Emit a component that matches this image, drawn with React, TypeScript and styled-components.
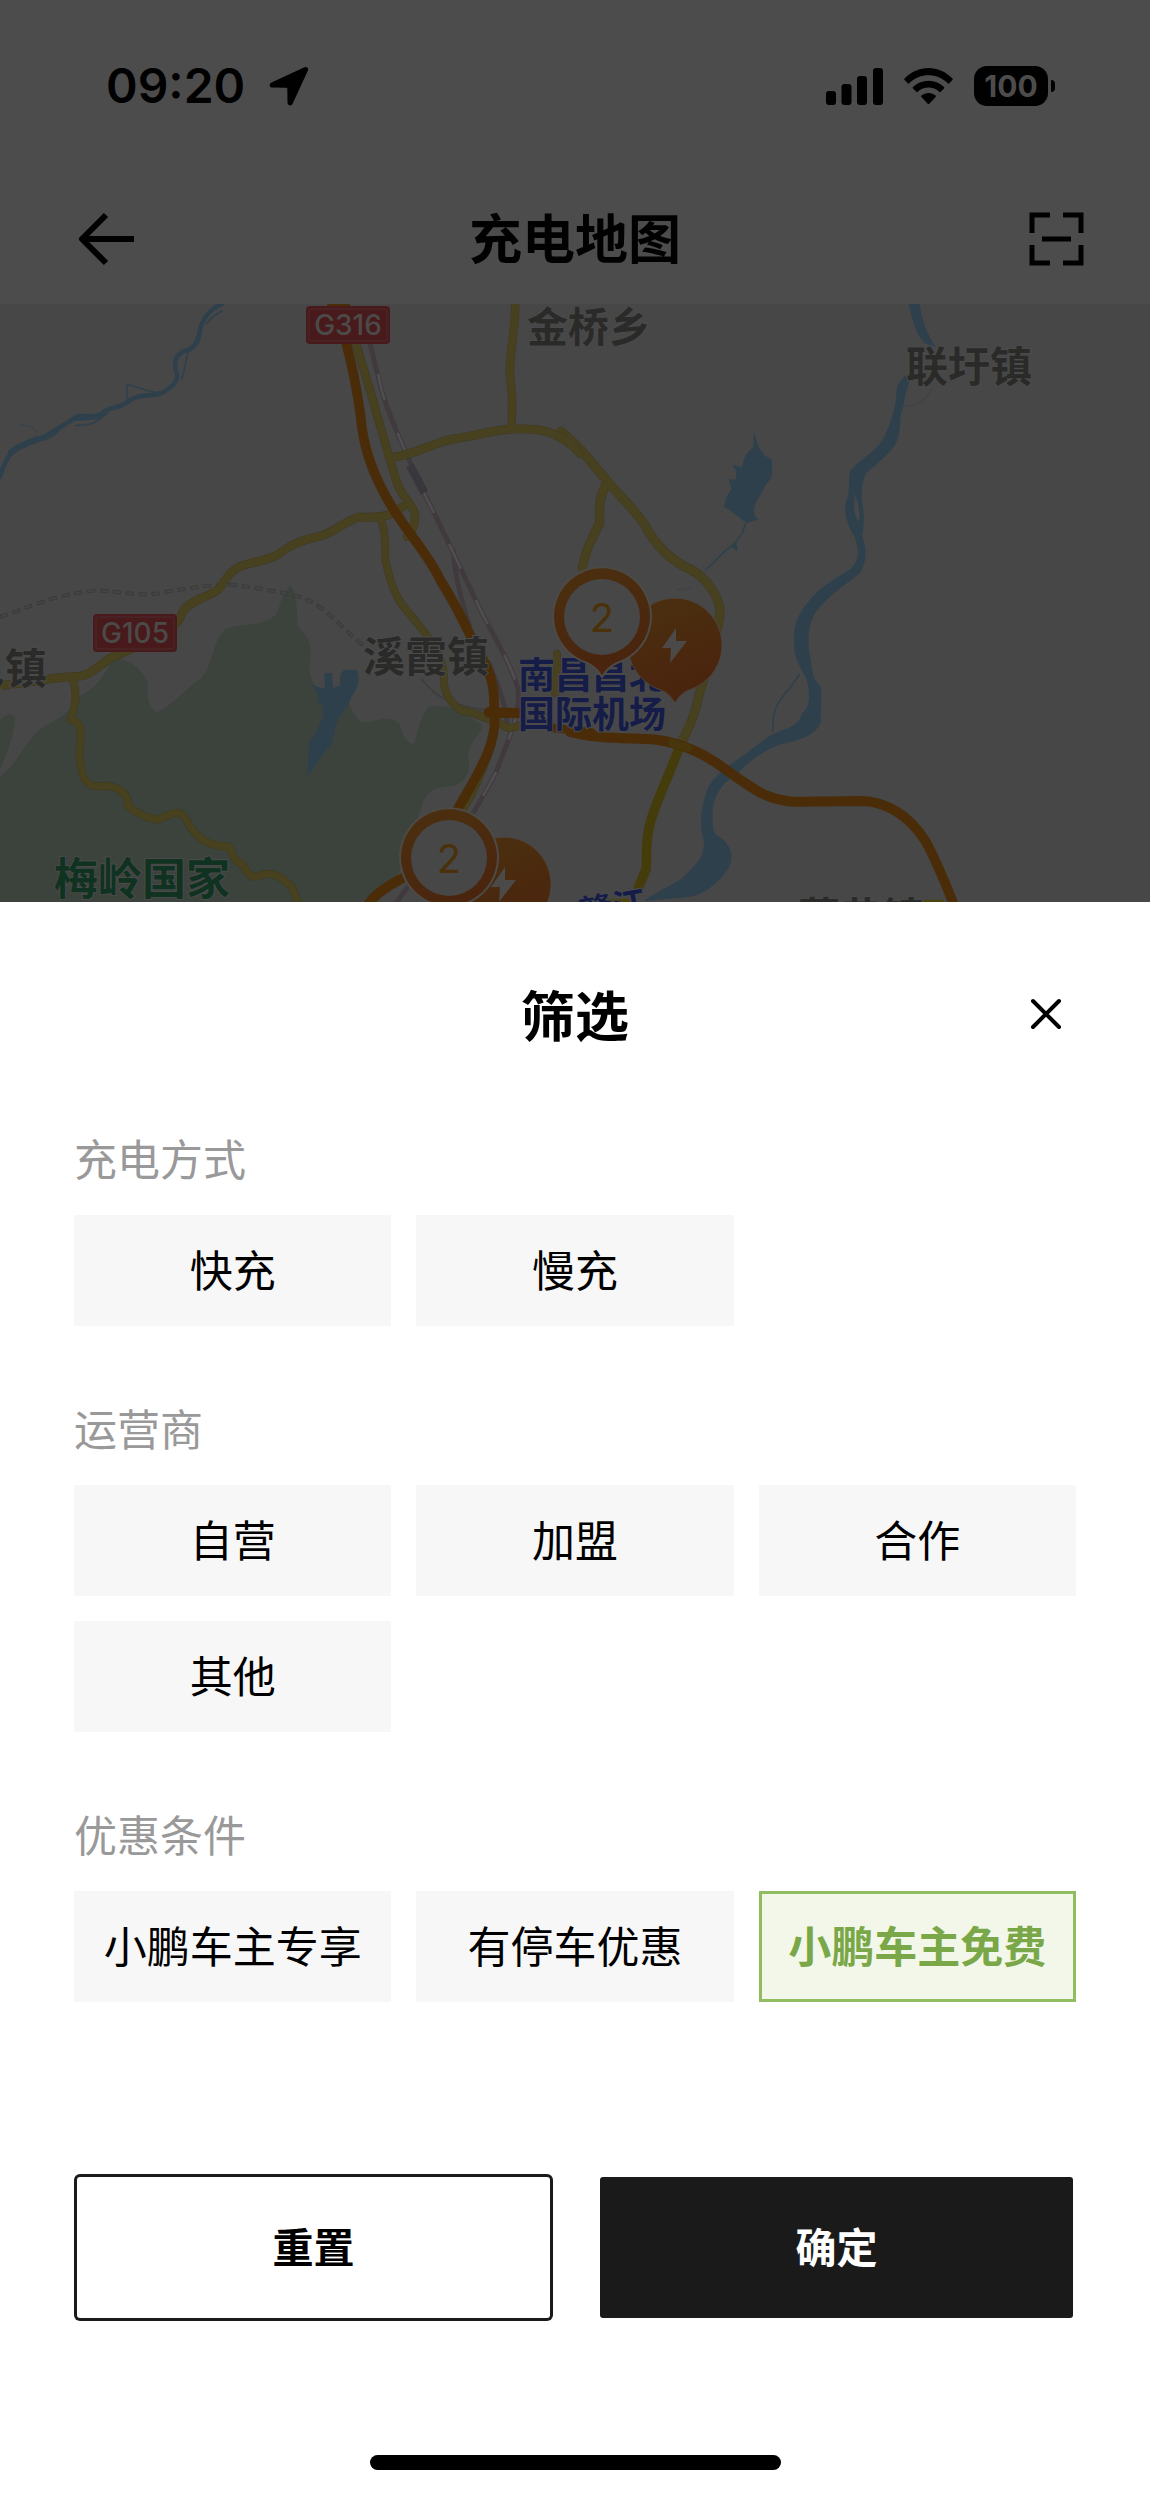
import React, { useState } from "react";
import styled, { createGlobalStyle, css } from "styled-components";

const sans = `Inter, "Noto Sans CJK SC", sans-serif`;
const cjk = `"Noto Sans CJK SC", "Noto Sans", sans-serif`;

const dim = {
  ink: "#010101",
  surface: "#4c4c4c",
  land: "#474748",
  forest: "#3b433c",
  water: "#2d404c",
  yellow: "#484120",
  yellowEdge: "#3f3b20",
  orange: "#4a2d08",
  rail: "#403a3e",
  red: "#481a1b",
  place: "#2a2a29",
  airport: "#151c48",
  park: "#103221",
  white: "#4b4a49",
};

const GlobalStyle = createGlobalStyle`
  * { box-sizing: border-box; }
  html, body { margin: 0; background: #ffffff; }
  button { font: inherit; color: inherit; border: 0; padding: 0; background: none; cursor: pointer; }
`;

const Screen = styled.div`
  display: flex;
  flex-direction: column;
  min-height: 100vh;
  background: ${dim.surface};
  font-family: ${cjk};
  color: ${dim.ink};
`;

const StatusBar = styled.div`
  display: flex;
  align-items: center;
  justify-content: space-between;
  height: 172px;
  padding: 0 95px 0 106px;
  font-family: ${sans};
`;

const StatusGroup = styled.div<{ $gap: number }>`
  display: flex;
  align-items: center;
  gap: ${(p) => p.$gap}px;
`;

const Clock = styled.span`
  font-size: 48px;
  font-weight: 600;
  line-height: 60px;
`;

const Battery = styled.div`
  display: flex;
  align-items: center;
  gap: 3px;
`;

const BatteryBody = styled.span`
  width: 74px;
  height: 40px;
  border-radius: 13px;
  background: ${dim.ink};
  color: ${dim.surface};
  font-size: 30px;
  font-weight: 700;
  line-height: 40px;
  text-align: center;
`;

const BatteryTip = styled.span`
  width: 4px;
  height: 12px;
  border-radius: 0 4px 4px 0;
  background: ${dim.ink};
`;

const NavBar = styled.header`
  display: grid;
  grid-template-columns: 84px 1fr 84px;
  align-items: center;
  height: 132px;
  padding: 2px 52px 0;
`;

const NavTitle = styled.h1`
  margin: 0;
  padding-bottom: 6px;
  font-size: 53px;
  font-weight: 700;
  line-height: 74px;
  text-align: center;
`;

const IconButton = styled.button`
  display: flex;
  align-items: center;
  justify-content: center;
  min-width: 60px;
  height: 60px;
`;

const MapFrame = styled.div`
  flex: 1 0 598px;
  display: flex;
  overflow: hidden;
  background: ${dim.land};

  svg {
    width: 100%;
    height: 598px;
  }
`;

const Sheet = styled.section`
  display: flex;
  flex-direction: column;
  padding-bottom: 23px;
  background: #ffffff;
  color: #000000;
`;

const SheetHeader = styled.div`
  display: grid;
  grid-template-columns: 60px 1fr 60px;
  align-items: center;
  padding: 74px 74px 76px;
`;

const SheetTitle = styled.h2`
  grid-column: 2;
  margin: 0;
  font-size: 54px;
  font-weight: 700;
  line-height: 75px;
  text-align: center;
`;

const Sections = styled.div`
  display: flex;
  flex-direction: column;
  gap: 71px;
  padding: 0 74px;
`;

const SectionLabel = styled.h3`
  margin: 0 0 28px;
  color: #999999;
  font-size: 43px;
  font-weight: 400;
  line-height: 60px;
`;

const OptionGrid = styled.div`
  display: grid;
  grid-template-columns: repeat(3, 1fr);
  gap: 25px;
`;

const Option = styled.button<{ $selected: boolean }>`
  height: 111px;
  padding-bottom: 6px;
  background: #f7f7f7;
  font-size: 43px;
  line-height: 60px;
  white-space: nowrap;

  ${(p) =>
    p.$selected &&
    css`
      border: 3px solid #92bc60;
      background: #f2f7ea;
      color: #7aa748;
      font-weight: 700;
    `}
`;

const Actions = styled.div`
  display: grid;
  grid-template-columns: 1fr 1fr;
  gap: 50px;
  margin: 175px 77px 137px;
`;

const Action = styled.button<{ $primary?: boolean }>`
  height: 141px;
  padding-bottom: 6px;
  border-radius: 3px;
  font-size: 41px;
  font-weight: 700;
  line-height: 60px;
  background: ${(p) => (p.$primary ? "#1a1a1a" : "#ffffff")};
  color: ${(p) => (p.$primary ? "#ffffff" : "#000000")};
  box-shadow: ${(p) => (p.$primary ? "none" : "0 0 0 3px #1a1a1a")};
`;

const HomeIndicator = styled.div`
  align-self: center;
  width: 411px;
  height: 15px;
  border-radius: 8px;
  background: #000000;
`;

function LocationArrow() {
  return (
    <svg width="40" height="40" viewBox="0 0 40 40" aria-hidden="true">
      <path
        d="M35.500 1.300 2.500 16.600c-2.800 1.400-2.200 4.900 1 5l14 .2c.5 0 .8.3.8.8l.2 13.900c.1 3.300 3.800 3.900 5.100 1.200L38.900 4.600c1-2.200-1.200-4.300-3.400-3.300z"
        fill={dim.ink}
      />
    </svg>
  );
}

function SignalIcon() {
  return (
    <svg width="57" height="37" viewBox="0 0 57 37" aria-hidden="true" fill={dim.ink}>
      <rect x="0" y="23" width="10" height="14" rx="3" />
      <rect x="15.500" y="16" width="10" height="21" rx="3" />
      <rect x="31" y="8" width="10" height="29" rx="3" />
      <rect x="47" y="0" width="10" height="37" rx="3" />
    </svg>
  );
}

function WifiIcon() {
  return (
    <svg width="49" height="37" viewBox="0 0 49 37" aria-hidden="true" fill={dim.ink}>
      <path d="M.6 10.500C14-3.500 35-3.500 48.400 10.500c.5.5.5 1 0 1.500l-3.200 3.300c-.5.5-1 .5-1.500 0-10.800-10.600-27.600-10.600-38.400 0-.5.5-1 .5-1.500 0L.6 12c-.5-.5-.5-1 0-1.500z" />
      <path d="M9 19c8.700-8.500 22.300-8.500 31 0 .5.500.5 1 0 1.500l-3.300 3.300c-.5.5-1 .5-1.500 0-6-5.600-15.400-5.600-21.400 0-.5.5-1 .5-1.500 0L9 20.500c-.5-.5-.5-1 0-1.500z" />
      <path d="M17.400 27.600c4-3.500 10.200-3.500 14.200 0 .5.500.5 1 0 1.500l-6.300 6.600c-.5.5-1.100.5-1.600 0l-6.300-6.600c-.5-.5-.5-1 0-1.500z" />
    </svg>
  );
}

function BackIcon() {
  return (
    <svg width="84" height="60" viewBox="0 0 84 60" fill="none" stroke={dim.ink} strokeWidth="6" aria-hidden="true">
      <path d="M54 6 30 30l24 24M30 30h52" strokeLinejoin="round" />
    </svg>
  );
}

function ScanIcon() {
  return (
    <svg width="60" height="60" viewBox="0 0 60 60" fill="none" stroke={dim.ink} strokeWidth="5" aria-hidden="true">
      <path d="M6 24V6h18M37 6h18v18M55 36v18H37M24 54H6V36M16 30h29" />
    </svg>
  );
}

function CloseIcon() {
  return (
    <svg width="32" height="32" viewBox="0 0 32 32" stroke="#000000" strokeWidth="4" strokeLinecap="round" aria-hidden="true">
      <path d="M3 3l26 26M29 3 3 29" />
    </svg>
  );
}

function Shield({ x, y, name }: { x: number; y: number; name: string }) {
  return (
    <g>
      <rect x={x} y={y} width="84" height="38" rx="4" fill={dim.red} />
      <rect x={x + 3} y={y + 3} width="78" height="32" rx="2" fill="none" stroke="#4a2c2e" />
      <text x={x + 42} y={y + 29} textAnchor="middle" fontFamily={sans} fontSize="28" fontWeight="500" fill={dim.white}>
        {name}
      </text>
    </g>
  );
}

function Bolt({ x, y }: { x: number; y: number }) {
  return (
    <path
      transform={`translate(${x} ${y})`}
      d="M1-17-13 3h9l-1 15 L12-4H1L1-17z"
      fill={dim.white}
    />
  );
}

function ChargerPin({ x, y }: { x: number; y: number }) {
  return (
    <g>
      <path
        transform={`translate(${x} ${y})`}
        d="M-14 45A47 47 0 1 1 14 45Q6 48 0 58-6 48-14 45z"
        fill="url(#pin)"
        stroke="#4d443c"
        strokeWidth="1"
      />
      <Bolt x={x} y={y} />
    </g>
  );
}

function CountPin({ x, y, count }: { x: number; y: number; count: number }) {
  return (
    <g>
      <path
        transform={`translate(${x} ${y})`}
        d="M-15 46A49 49 0 1 1 15 46Q6 50 0 60-6 50-15 46z"
        fill="url(#pin)"
        stroke="#4d4a46"
        strokeWidth="2"
      />
      <circle cx={x} cy={y} r="38" fill={dim.land} />
      <text x={x} y={y + 15} textAnchor="middle" fontFamily={sans} fontSize="40" fill="#4b3109">
        {count}
      </text>
    </g>
  );
}

function Place({ x, y, size, color, children }: { x: number; y: number; size: number; color: string; children: string }) {
  return (
    <text
      x={x}
      y={y}
      fontFamily={cjk}
      fontSize={size}
      fontWeight="700"
      fill={color}
      stroke="#4a4a4b"
      strokeWidth="2"
      paintOrder="stroke"
    >
      {children}
    </text>
  );
}

/* Two map tiles, each in its own grid, placed side by side. */
function WestTile() {
  return (
    <g transform="translate(0 -4) scale(.37 .389)" fill="none" strokeLinejoin="round" strokeLinecap="round">
      <path
        fill={dim.forest}
        d="M0 1225C40 1200 60 1150 100 1110C140 1080 190 1070 210 1020C260 1000 290 960 305 915C350 930 380 940 400 985C395 1020 400 1050 425 1060C470 1040 500 1000 540 975C580 940 570 880 610 845C660 830 710 840 745 810C760 790 755 760 785 735C805 760 800 790 805 840C830 860 842 880 838 930C830 960 850 1000 870 1010L920 1000C940 1010 945 1060 975 1085C1010 1090 1050 1060 1080 1090C1090 1120 1100 1145 1120 1140C1130 1110 1140 1050 1165 1045C1200 1040 1230 1050 1265 1070L1300 1090C1310 1110 1270 1130 1265 1170C1275 1210 1260 1240 1220 1250C1170 1250 1150 1270 1140 1300C1120 1360 1090 1400 1080 1470L980 1570H0Z"
      />
      <path fill={dim.forest} d="M0 1080C20 1060 45 1060 40 1085C35 1120 20 1170 0 1205Z" />

      <g stroke={dim.water}>
        <path strokeWidth="12" d="M600 10C570 20 545 50 540 80C538 105 530 120 510 128C480 135 468 150 475 180C490 210 460 225 440 238C410 250 370 240 345 262C320 280 300 275 285 285C265 310 240 295 210 300C170 320 140 345 100 360C70 370 40 380 25 400C10 420 5 440 0 455" />
        <path strokeWidth="4" d="M510 130C500 160 500 180 490 205M440 238C400 240 370 220 342 217L345 262M560 60C570 40 590 35 600 28M285 285C270 320 240 320 205 323M160 335C130 365 110 360 70 368M540 80L520 120" />
        <path strokeWidth="2" d="M100 340C90 320 70 325 55 320" />
        <path strokeWidth="16" d="M285 288C265 306 240 298 210 303M100 358C70 370 50 375 30 392" />
      </g>
      <path fill={dim.water} d="M877 960L897 958L900 1000L922 995C915 970 920 955 935 950L965 952C975 980 965 1000 950 1020C935 1060 915 1065 912 1085C900 1110 905 1130 893 1145C870 1165 855 1200 830 1222C833 1180 835 1160 835 1135C855 1120 860 1090 875 1070L872 1040L860 1035C865 1010 850 1000 843 990L878 1000Z" />
      <path fill={dim.water} d="M875 1005L925 990L955 955L940 1040L900 1075L870 1055Z" />

      <path stroke="#3b3b3a" strokeWidth="10" strokeDasharray="22 13" strokeLinecap="butt" d="M0 815C80 790 150 755 260 747C350 750 380 765 450 750C520 740 570 730 640 733C720 745 800 755 840 775C890 800 930 850 985 890" />
      <path stroke={dim.land} strokeWidth="4" strokeDasharray="16 19" strokeDashoffset="-3" strokeLinecap="butt" d="M0 815C80 790 150 755 260 747C350 750 380 765 450 750C520 740 570 730 640 733C720 745 800 755 840 775C890 800 930 850 985 890" />
      <path stroke="#3d3d3d" strokeWidth="5" strokeDasharray="14 6" d="M1140 975C1170 1010 1200 1040 1320 1055" />

      <path stroke={dim.rail} strokeWidth="13" strokeLinecap="butt" d="M1000 110C1020 190 1030 240 1060 310C1100 400 1130 470 1180 560C1210 620 1240 680 1290 780C1330 860 1380 930 1400 1000C1410 1060 1370 1140 1340 1215C1310 1270 1290 1300 1260 1350M1225 640C1230 720 1250 780 1270 840M1320 930C1350 1000 1370 1050 1370 1090M1110 1500L1070 1550" />
      <path stroke="#504e51" strokeWidth="7" strokeDasharray="70 90" strokeLinecap="butt" d="M1022 190C1032 240 1040 260 1060 310C1100 400 1130 470 1180 560C1210 620 1240 680 1290 780C1330 860 1380 930 1400 1000C1410 1060 1370 1140 1340 1215C1310 1270 1290 1300 1270 1330" />
      <path stroke="#39373b" strokeWidth="22" strokeLinecap="butt" d="M1108 425L1147 495" />

      {[dim.yellowEdge, dim.yellow].map((color, i) => (
        <g key={color} stroke={color}>
          <path strokeWidth={23 - i * 3} d="M962 110C985 190 1005 240 1020 300C1040 360 1055 420 1075 475C1090 510 1110 520 1120 545C1125 570 1118 590 1100 608M1055 405C1120 400 1160 370 1220 358C1280 352 1330 333 1382 332C1460 328 1510 335 1568 395M1392 10C1395 90 1370 150 1380 210C1388 260 1383 300 1382 332" />
          <path strokeWidth={23 - i * 3} d="M1090 530C1060 560 1010 560 970 558C930 570 890 605 860 608C800 620 780 635 750 655C700 680 660 670 625 700C600 725 600 745 570 755C540 770 500 780 490 810C480 850 370 890 300 920C260 945 240 970 200 968C140 970 80 985 10 990" />
          <path strokeWidth={21 - i * 3} d="M1030 565C1045 600 1040 640 1042 670C1060 750 1080 780 1110 810C1150 860 1190 890 1200 960C1195 1000 1210 1030 1245 1055C1280 1060 1300 1070 1330 1080C1370 1090 1360 1110 1400 1095M1330 1140C1300 1220 1280 1270 1250 1310" />
          <path strokeWidth={21 - i * 3} d="M195 970C210 1010 205 1040 190 1080C230 1080 215 1130 215 1170C220 1220 225 1250 265 1250C310 1245 350 1265 345 1300C370 1320 400 1335 430 1335C460 1320 490 1305 505 1340C530 1380 550 1400 610 1405C630 1400 620 1440 655 1450C670 1475 680 1490 700 1480C740 1465 770 1490 790 1510L805 1550M1505 910C1510 940 1500 970 1500 1010" />
        </g>
      ))}
      <path stroke={dim.orange} strokeWidth="26" d="M930 90C950 160 965 230 975 300C980 370 1000 430 1040 500C1090 590 1150 640 1190 720C1230 780 1250 820 1270 860C1300 920 1340 960 1335 1050C1350 1140 1290 1220 1230 1320C1180 1400 1110 1480 1080 1490C1040 1510 1010 1530 990 1560M1320 1060L1400 1062" />
      <path stroke={dim.orange} strokeWidth="22" d="M895 12H935M1495 1100L1600 1112" />
    </g>
  );
}

function EastTile() {
  return (
    <g transform="translate(570 -4) scale(.37 .389)" fill="none" strokeLinejoin="round" strokeLinecap="round">
      <path fill={dim.water} d="M915 10H945C950 50 965 90 990 122L960 112C935 90 925 50 915 10Z" />
      <path
        fill={dim.water}
        d="M905 195C915 200 920 212 912 225C900 260 905 270 895 290C890 320 895 340 880 370C860 400 830 420 800 445C790 470 785 490 790 520C795 550 795 580 790 605C800 640 805 665 785 700C750 730 710 750 680 785C640 820 640 880 650 920C655 950 655 975 675 990C685 1010 675 1060 678 1085C660 1125 620 1130 560 1145C510 1165 480 1190 450 1220C410 1240 385 1280 385 1320C385 1350 385 1370 400 1378C440 1400 445 1440 425 1465C400 1500 360 1530 320 1535L200 1545C250 1510 290 1500 310 1480C340 1450 370 1430 360 1380C345 1340 360 1290 370 1260C385 1225 420 1205 440 1190C480 1165 520 1130 550 1115C590 1100 620 1095 625 1065C650 1045 650 1020 640 975C620 940 605 920 606 890C600 840 620 800 645 775C670 740 720 715 760 690C785 665 780 640 770 610C750 580 740 550 745 520C760 490 750 460 757 440C780 410 830 390 850 350C870 310 880 280 883 230C885 215 895 205 905 195Z"
      />
      <path fill={dim.land} d="M770 500C782 530 785 550 780 570C770 560 765 530 770 500Z" />
      <path fill={dim.water} d="M497 340C505 355 502 370 515 385C525 405 540 405 546 412V450C540 470 525 475 518 495C510 510 500 520 497 540C500 555 500 560 512 563L480 573C460 565 445 545 417 533C420 500 430 500 437 485L428 460L447 462L450 440L438 423L465 430C470 410 475 390 495 380Z" />
      <path stroke={dim.water} strokeWidth="4" d="M475 575L465 600L450 620L435 635C410 645 400 670 370 690M620 962C600 1000 560 1020 550 1070L548 1110" />
      <path stroke="#3c4347" strokeWidth="3" d="M900 272C940 275 960 260 980 225M360 685L370 695L350 715M325 740L290 745" />
      <path fill={dim.water} d="M437 635L450 622L453 645Z" />

      {[dim.yellowEdge, dim.yellow].map((color, i) => (
        <g key={color} stroke={color}>
          <path strokeWidth={25 - i * 3} d="M-25 338C30 380 60 420 100 465C140 510 170 535 200 575C230 630 270 670 330 695C370 715 410 770 405 810C390 900 360 970 345 1030C335 1080 310 1120 300 1140M100 470C75 510 80 540 80 575C50 630 40 650 33 690" />
        </g>
      ))}
      <path stroke="#453c0c" strokeWidth="26" d="M295 1150C270 1220 240 1270 218 1340C200 1400 210 1440 205 1465L185 1510" />
      <path stroke={dim.orange} strokeWidth="26" d="M0 1110C80 1130 160 1125 230 1130C310 1140 370 1170 440 1220C500 1260 540 1290 620 1290L790 1288C860 1290 920 1330 960 1390C990 1440 1010 1490 1040 1560" />
      <path stroke="#48370c" strokeWidth="20" d="M275 1138L320 1152" />
      <path stroke="#4a430b" strokeWidth="10" d="M960 1547H1005M100 1544H170" />
    </g>
  );
}

function ChargingMap() {
  return (
    <svg viewBox="0 0 1150 598" preserveAspectRatio="xMidYMid slice" role="img" aria-label="充电地图">
      <defs>
        <linearGradient id="pin" x1="0" y1="0" x2="0.300" y2="1">
          <stop offset="0" stopColor="#4b300f" />
          <stop offset="1" stopColor="#4a240e" />
        </linearGradient>
      </defs>
      <rect width="1150" height="598" fill={dim.land} />
      <EastTile />
      <WestTile />
      <Shield x={306} y={2} name="G316" />
      <Shield x={93} y={310} name="G105" />
      <Place x={527} y={38} size={41} color={dim.place}>金桥乡</Place>
      <Place x={906} y={78} size={42} color={dim.place}>联圩镇</Place>
      <Place x={363} y={368} size={42} color={dim.place}>溪霞镇</Place>
      <Place x={-37} y={380} size={42} color={dim.place}>邑镇</Place>
      <Place x={518} y={385} size={37} color={dim.airport}>南昌昌北</Place>
      <Place x={518} y={424} size={37} color={dim.airport}>国际机场</Place>
      <Place x={54} y={591} size={44} color={dim.park}>梅岭国家</Place>
      <Place x={798} y={629} size={42} color={dim.place}>蒋巷镇</Place>
      <g transform="rotate(-10 600 600)">
        <Place x={578} y={618} size={34} color={dim.airport}>赣江</Place>
      </g>
      <ChargerPin x={675} y={341} />
      <CountPin x={602} y={313} count={2} />
      <ChargerPin x={504} y={580} />
      <CountPin x={449} y={554} count={2} />
    </svg>
  );
}

const sections = [
  { title: "充电方式", options: ["快充", "慢充"] },
  { title: "运营商", options: ["自营", "加盟", "合作", "其他"] },
  { title: "优惠条件", options: ["小鹏车主专享", "有停车优惠", "小鹏车主免费"] },
];

export default function App() {
  const [selected, setSelected] = useState<string[]>(["小鹏车主免费"]);
  const toggle = (name: string) =>
    setSelected((now) => (now.includes(name) ? now.filter((n) => n !== name) : [...now, name]));

  return (
    <Screen>
      <GlobalStyle />
      <StatusBar>
        <StatusGroup $gap={24}>
          <Clock>09:20</Clock>
          <LocationArrow />
        </StatusGroup>
        <StatusGroup $gap={21}>
          <SignalIcon />
          <WifiIcon />
          <Battery>
            <BatteryBody>100</BatteryBody>
            <BatteryTip />
          </Battery>
        </StatusGroup>
      </StatusBar>
      <NavBar>
        <IconButton type="button" aria-label="返回">
          <BackIcon />
        </IconButton>
        <NavTitle>充电地图</NavTitle>
        <IconButton type="button" aria-label="扫码">
          <ScanIcon />
        </IconButton>
      </NavBar>
      <MapFrame>
        <ChargingMap />
      </MapFrame>
      <Sheet>
        <SheetHeader>
          <SheetTitle>筛选</SheetTitle>
          <IconButton type="button" aria-label="关闭">
            <CloseIcon />
          </IconButton>
        </SheetHeader>
        <Sections>
          {sections.map((section) => (
            <div key={section.title}>
              <SectionLabel>{section.title}</SectionLabel>
              <OptionGrid>
                {section.options.map((name) => (
                  <Option
                    key={name}
                    type="button"
                    aria-pressed={selected.includes(name)}
                    $selected={selected.includes(name)}
                    onClick={() => toggle(name)}
                  >
                    {name}
                  </Option>
                ))}
              </OptionGrid>
            </div>
          ))}
        </Sections>
        <Actions>
          <Action type="button" onClick={() => setSelected([])}>
            重置
          </Action>
          <Action type="button" $primary>
            确定
          </Action>
        </Actions>
        <HomeIndicator />
      </Sheet>
    </Screen>
  );
}
